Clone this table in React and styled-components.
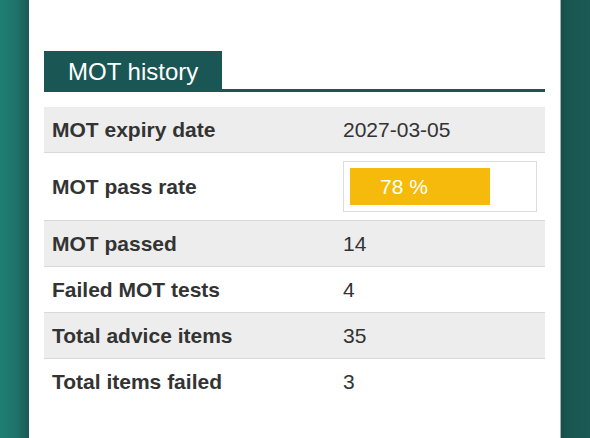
import React from "react";
import styled, { createGlobalStyle } from "styled-components";

const GlobalStyle = createGlobalStyle`
  html, body {
    margin: 0;
    padding: 0;
    height: 100%;
    overflow: hidden;
  }
  body {
    font-family: "Liberation Sans", Arial, sans-serif;
    background: #1a5552;
  }
  #root { height: 100%; }
`;

const Page = styled.div`
  display: flex;
  height: 438px;
  width: 590px;
`;

const LeftGutter = styled.div`
  width: 29px;
  flex: none;
  background: linear-gradient(to right, #1f7f74 0%, #1e7168 60%, #1d5853 100%);
`;

const RightGutter = styled.div`
  flex: 1;
  background: linear-gradient(to right, #174f4c 0%, #1a5753 30%, #1b5955 100%);
  border-left: 1px solid #9fb4b2;
`;

const Card = styled.main`
  width: 531px;
  flex: none;
  background: #fff;
  box-sizing: border-box;
  padding: 51px 15px 0 15px;
`;

const SectionHeader = styled.div`
  display: flex;
  border-bottom: 3px solid #1a5653;
`;

const Tab = styled.h2`
  margin: 0;
  background: #1a5653;
  color: #fff;
  font-weight: 400;
  font-size: 24px;
  line-height: 32px;
  padding: 5px 24px 1px 24px;
`;

const Table = styled.div`
  margin-top: 15px;
  display: flex;
  flex-direction: column;
`;

const Row = styled.div`
  display: grid;
  grid-template-columns: 291px 1fr;
  align-items: center;
  background: ${(p) => (p.$striped ? "#ededed" : "#fff")};
  border-bottom: ${(p) => (p.$last ? "none" : "1px solid #d9d9d9")};
`;

const Cell = styled.div`
  padding: 8px;
  font-size: 21px;
  line-height: 29px;
  color: #333;
  font-weight: ${(p) => (p.$label ? 700 : 400)};
`;

const ProgressBox = styled.div`
  border: 1px solid #dcdcdc;
  padding: 6px;
`;

const ProgressBar = styled.div`
  background: #f5ba0b;
  color: #fff;
  font-size: 21px;
  line-height: 37px;
  height: 37px;
  padding-left: 30px;
  box-sizing: border-box;
  white-space: nowrap;
`;

const rows = [
  { label: "MOT expiry date", value: "2027-03-05" },
  { label: "MOT pass rate", progress: 78 },
  { label: "MOT passed", value: "14" },
  { label: "Failed MOT tests", value: "4" },
  { label: "Total advice items", value: "35" },
  { label: "Total items failed", value: "3" },
];

export default function App() {
  return (
    <>
      <GlobalStyle />
      <Page>
        <LeftGutter />
        <Card>
          <SectionHeader>
            <Tab>MOT history</Tab>
          </SectionHeader>
          <Table>
            {rows.map((r, i) => (
              <Row key={r.label} $striped={i % 2 === 0} $last={i === rows.length - 1}>
                <Cell $label>{r.label}</Cell>
                <Cell>
                  {r.progress != null ? (
                    <ProgressBox>
                      <ProgressBar style={{ width: `${r.progress}%` }}>
                        {r.progress} %
                      </ProgressBar>
                    </ProgressBox>
                  ) : (
                    r.value
                  )}
                </Cell>
              </Row>
            ))}
          </Table>
        </Card>
        <RightGutter />
      </Page>
    </>
  );
}
